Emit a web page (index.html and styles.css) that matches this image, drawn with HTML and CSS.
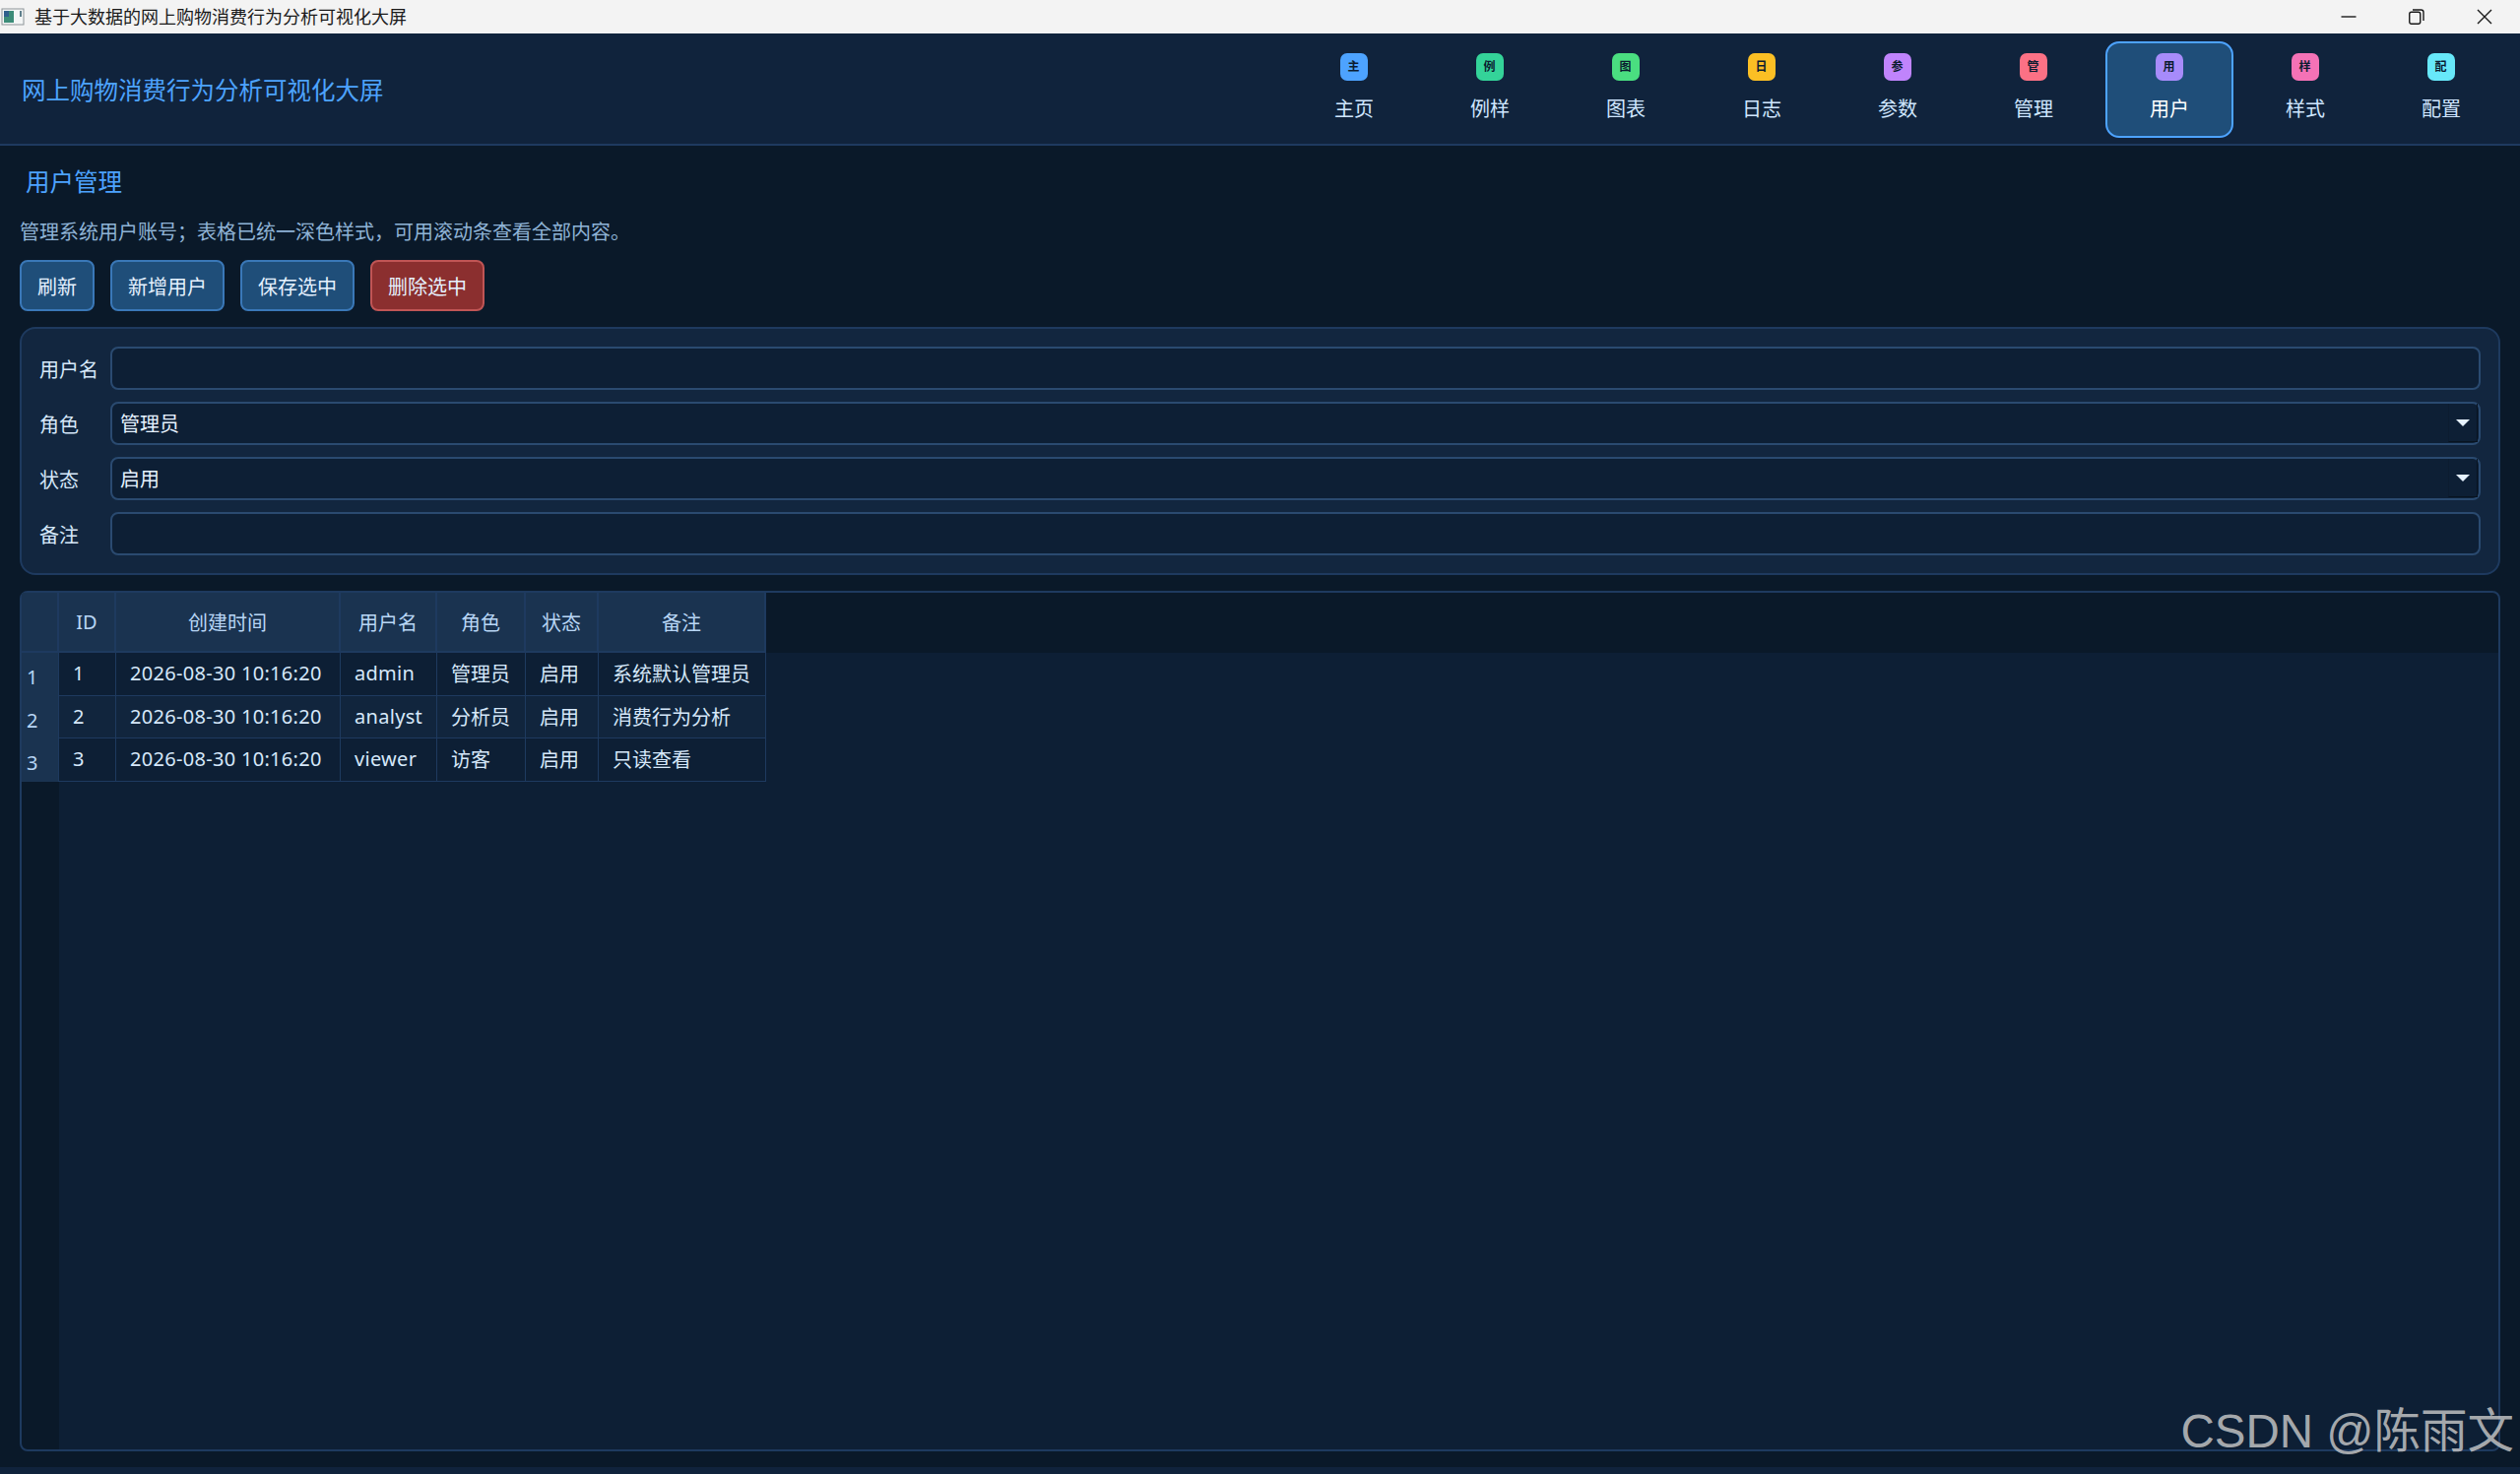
FILE: index.html
```html
<!DOCTYPE html>
<html lang="zh-CN">
<head>
    <meta charset="UTF-8">
    <meta name="viewport" content="width=device-width, initial-scale=1.0">
    <title>基于大数据的网上购物消费行为分析可视化大屏</title>
    <link rel="stylesheet" href="styles.css">
</head>
<body>
    <div class="titlebar">
        <svg class="app-icon" width="24" height="20" viewBox="0 0 24 20">
            <rect x="1" y="2" width="22" height="16" fill="#f4f6f6" stroke="#8d9498"></rect>
            <rect x="3" y="4" width="10" height="12" fill="#3c8c78"></rect>
            <rect x="3" y="4" width="5" height="6" fill="#2f5f8c"></rect>
            <rect x="19" y="4" width="2" height="6" fill="#5f7f8c"></rect>
        </svg>
        <span class="titlebar-text">基于大数据的网上购物消费行为分析可视化大屏</span>
        <div class="win-controls">
            <svg width="16" height="16" viewBox="0 0 16 16"><path d="M0.5 8H15.5" class="win-line"></path></svg>
            <svg width="16" height="16" viewBox="0 0 16 16"><rect x="0.75" y="3.25" width="11" height="12" rx="2" class="win-line"></rect><path d="M4 1H12.5Q15 1 15 3.5V12" class="win-line"></path></svg>
            <svg width="16" height="16" viewBox="0 0 16 16"><path d="M1 1L15 15M15 1L1 15" class="win-line"></path></svg>
        </div>
    </div>

    <header class="topbar">
        <div class="app-title">网上购物消费行为分析可视化大屏</div>
        <nav class="nav">
            <a class="nav-item"><span class="nav-icon blue">主</span><span>主页</span></a>
            <a class="nav-item"><span class="nav-icon teal">例</span><span>例样</span></a>
            <a class="nav-item"><span class="nav-icon green">图</span><span>图表</span></a>
            <a class="nav-item"><span class="nav-icon amber">日</span><span>日志</span></a>
            <a class="nav-item"><span class="nav-icon purple">参</span><span>参数</span></a>
            <a class="nav-item"><span class="nav-icon red">管</span><span>管理</span></a>
            <a class="nav-item active"><span class="nav-icon violet">用</span><span>用户</span></a>
            <a class="nav-item"><span class="nav-icon pink">样</span><span>样式</span></a>
            <a class="nav-item"><span class="nav-icon cyan">配</span><span>配置</span></a>
        </nav>
    </header>

    <main class="page">
        <h1 class="page-title">用户管理</h1>
        <p class="page-desc">管理系统用户账号；表格已统一深色样式，可用滚动条查看全部内容。</p>

        <div class="toolbar">
            <button class="btn">刷新</button>
            <button class="btn">新增用户</button>
            <button class="btn">保存选中</button>
            <button class="btn danger">删除选中</button>
        </div>

        <section class="form-panel">
            <div class="form-row">
                <label class="form-label">用户名</label>
                <div class="field"></div>
            </div>
            <div class="form-row">
                <label class="form-label">角色</label>
                <div class="field combo"><span>管理员</span><span class="combo-btn"><i class="arrow"></i></span></div>
            </div>
            <div class="form-row">
                <label class="form-label">状态</label>
                <div class="field combo"><span>启用</span><span class="combo-btn"><i class="arrow"></i></span></div>
            </div>
            <div class="form-row">
                <label class="form-label">备注</label>
                <div class="field"></div>
            </div>
        </section>

        <section class="table-view">
            <table class="grid">
                <colgroup>
                    <col class="c-row"><col class="c-id"><col class="c-time"><col class="c-user"><col class="c-role"><col class="c-state"><col class="c-note">
                </colgroup>
                <thead>
                    <tr>
                        <th></th><th>ID</th><th>创建时间</th><th>用户名</th><th>角色</th><th>状态</th><th>备注</th>
                    </tr>
                </thead>
                <tbody>
                    <tr>
                        <th>1</th><td class="num">1</td><td class="num">2026-08-30 10:16:20</td><td class="num">admin</td><td>管理员</td><td>启用</td><td>系统默认管理员</td>
                    </tr>
                    <tr>
                        <th>2</th><td class="num">2</td><td class="num">2026-08-30 10:16:20</td><td class="num">analyst</td><td>分析员</td><td>启用</td><td>消费行为分析</td>
                    </tr>
                    <tr>
                        <th>3</th><td class="num">3</td><td class="num">2026-08-30 10:16:20</td><td class="num">viewer</td><td>访客</td><td>启用</td><td>只读查看</td>
                    </tr>
                </tbody>
            </table>
        </section>
    </main>
    <div class="bottom-strip"></div>

    <div class="watermark">CSDN @陈雨文</div>
</body>
</html>
```

FILE: styles.css
```css
* {
    margin: 0;
    padding: 0;
    box-sizing: border-box;
}

body {
    font-family: "Noto Sans", "Noto Sans CJK SC", sans-serif;
    font-size: 20px;
    color: #d6e8fa;
    background-color: #0a1929;
    display: flex;
    flex-direction: column;
    height: 100vh;
    overflow: hidden;
    position: relative;
}

/* window chrome */
.titlebar {
    height: 34px;
    background-color: #f3f3f3;
    color: #1a1a1a;
    display: flex;
    align-items: center;
    flex-shrink: 0;
}

.app-icon {
    margin-left: 1px;
    margin-right: 10px;
}

.titlebar-text {
    font-size: 18px;
    line-height: 34px;
}

.win-controls {
    margin-left: auto;
    margin-right: 28px;
    display: flex;
    gap: 53px;
}

.win-line {
    fill: none;
    stroke: #1a1a1a;
    stroke-width: 1.4;
}

/* top bar */
.topbar {
    height: 114px;
    background-color: #10233c;
    border-bottom: 2px solid #1e3a5f;
    display: flex;
    align-items: center;
    justify-content: space-between;
    padding: 2px 15px 0 22px;
    flex-shrink: 0;
}

.app-title {
    font-size: 24.5px;
    color: #4da3ff;
    margin-top: -2px;
}

.nav {
    display: flex;
    gap: 8px;
}

.nav-item {
    width: 130px;
    height: 98px;
    border: 2px solid transparent;
    border-radius: 14px;
    display: flex;
    flex-direction: column;
    align-items: center;
    padding-top: 10px;
    color: #cfe6ff;
    line-height: 28px;
    gap: 15px;
}

.nav-item.active {
    background-color: #1f4e79;
    border-color: #4da3ff;
    color: #fff;
}

.nav-icon {
    width: 28px;
    height: 28px;
    border-radius: 7px;
    display: flex;
    align-items: center;
    justify-content: center;
    font-size: 12px;
    font-weight: 700;
    color: #0b1c30;
    margin-right: 1px;
}

.blue { background-color: #4da3ff; }
.teal { background-color: #34d399; }
.green { background-color: #4ade80; }
.amber { background-color: #fbbf24; }
.purple { background-color: #c084fc; }
.red { background-color: #fb7185; }
.violet { background-color: #a78bfa; }
.pink { background-color: #f472b6; }
.cyan { background-color: #67e8f9; }

/* page */
.page {
    flex: 1;
    padding: 16px 20px;
    display: flex;
    flex-direction: column;
    min-height: 0;
}

.page-title {
    font-size: 24.5px;
    font-weight: 400;
    line-height: 42px;
    color: #4da3ff;
    padding-left: 6px;
}

.page-desc {
    font-size: 20px;
    line-height: 26px;
    padding-top: 1px;
    margin-top: 16px;
    margin-bottom: -1px;
    color: #8fb3d6;
}

.toolbar {
    display: flex;
    gap: 16px;
    margin-top: 16px;
}

.btn {
    font-family: inherit;
    font-size: 20px;
    height: 52px;
    padding: 0 16px;
    color: #e6f2ff;
    background-color: #1f4e79;
    border: 2px solid #3a78b8;
    border-radius: 8px;
}

.btn.danger {
    background-color: #8b2f2f;
    border-color: #c05555;
}

.form-panel {
    margin-top: 16px;
    padding: 18px;
    background-color: #12263f;
    border: 2px solid #1e3a5f;
    border-radius: 16px;
    display: flex;
    flex-direction: column;
    gap: 12px;
}

.form-row {
    display: flex;
    align-items: center;
}

.form-label {
    width: 72px;
    flex-shrink: 0;
}

.field {
    flex: 1;
    height: 44px;
    background-color: #0d1f35;
    border: 2px solid #2a4a70;
    border-radius: 8px;
    color: #e6f2ff;
    line-height: 41px;
    padding-left: 8px;
}

.combo {
    display: flex;
    justify-content: space-between;
    padding-right: 1px;
}

.combo-btn {
    width: 30px;
    height: 39px;
    border-left: 1px solid #0c1c30;
    border-bottom: 1px solid #081320;
    border-right: 1px solid #081320;
    display: flex;
    align-items: center;
    justify-content: center;
}

.arrow {
    width: 0;
    height: 0;
    border-left: 7px solid transparent;
    border-right: 7px solid transparent;
    border-top: 7px solid #e6f2ff;
}

/* table */
.table-view {
    margin-top: 16px;
    flex: 1;
    min-height: 0;
    border: 2px solid #1e3a5f;
    border-radius: 8px;
    background:
        linear-gradient(#0a1929, #0a1929) top left / 100% 61px no-repeat,
        linear-gradient(#0a1929, #0a1929) top left / 38px 100% no-repeat,
        #0d1f35;
}

.grid {
    border-collapse: separate;
    border-spacing: 0;
    table-layout: fixed;
    width: 756px;
}

.c-row { width: 38px; }
.c-id { width: 58px; }
.c-time { width: 228px; }
.c-user { width: 98px; }
.c-role { width: 90px; }
.c-state { width: 74px; }
.c-note { width: 170px; }

.grid th {
    font-weight: 400;
    color: #b8d6f5;
    background-color: #1a3350;
}

.grid thead th {
    height: 61px;
    border-right: 2px solid #1e3a5f;
    border-bottom: 2px solid #1e3a5f;
}

.grid tbody th {
    text-align: left;
    padding: 5px 0 0 5px;
    border-right: 1px solid #1e3a5f;
}

.grid td {
    height: 44px;
    padding: 0 0 2px 14px;
    color: #d6e8fa;
    background-color: #0d1f35;
    border-right: 1px solid #1e3a5f;
    border-bottom: 1px solid #1e3a5f;
    white-space: nowrap;
}

.grid tbody tr:nth-child(2) td {
    height: 43px;
    background-color: #11253d;
}

.grid td.num {
    letter-spacing: 0.3px;
}

/* bottom */
.bottom-strip {
    height: 7px;
    background-color: #10233c;
    flex-shrink: 0;
}

.watermark {
    position: absolute;
    right: 6px;
    bottom: 13px;
    font-family: "Liberation Sans", "Noto Sans CJK SC", sans-serif;
    font-size: 47.5px;
    line-height: 60px;
    color: rgba(200, 200, 200, 0.82);
    white-space: nowrap;
}
```
